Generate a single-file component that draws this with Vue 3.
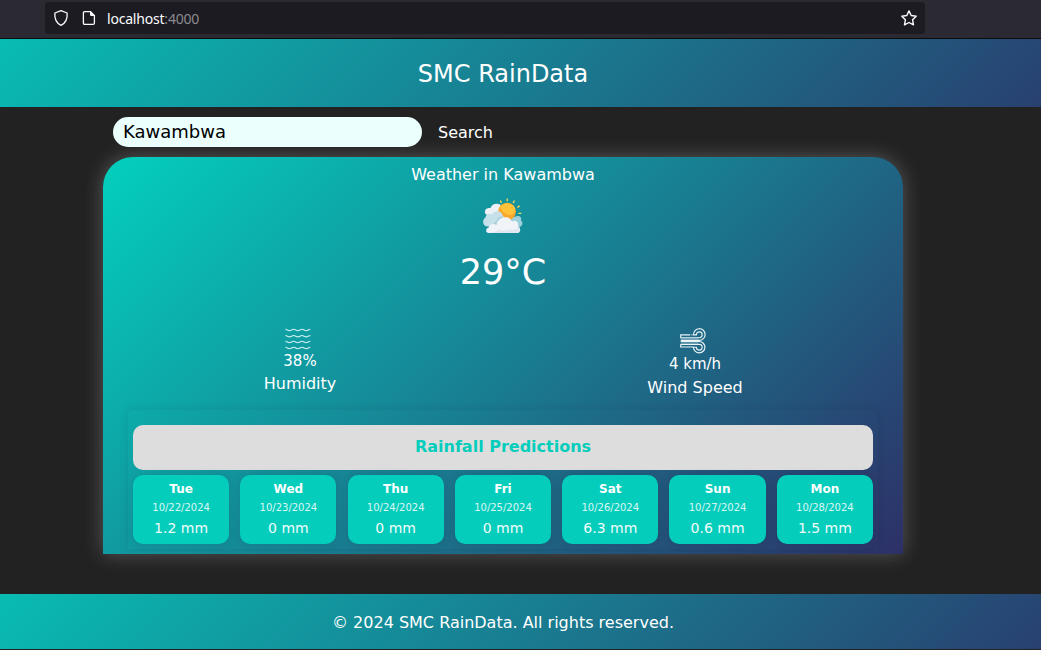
<script setup>
const days = [
  { day: 'Tue', date: '10/22/2024', rain: '1.2 mm' },
  { day: 'Wed', date: '10/23/2024', rain: '0 mm' },
  { day: 'Thu', date: '10/24/2024', rain: '0 mm' },
  { day: 'Fri', date: '10/25/2024', rain: '0 mm' },
  { day: 'Sat', date: '10/26/2024', rain: '6.3 mm' },
  { day: 'Sun', date: '10/27/2024', rain: '0.6 mm' },
  { day: 'Mon', date: '10/28/2024', rain: '1.5 mm' },
]
</script>

<template>
  <div class="window">
    <div class="toolbar">
      <div class="urlbar">
        <svg class="shield" width="16" height="18" viewBox="0 0 16 18" fill="none" stroke="#fbfbfe" stroke-width="1.3" stroke-linejoin="round">
          <path d="M8 1.7 L14.1 4 C14.6 9.5 12.8 14 8 16.3 C3.2 14 1.4 9.5 1.9 4 Z" />
        </svg>
        <svg class="page" width="14" height="16" viewBox="0 0 14 16">
          <path d="M2.7 1.6 H8.5 L12.4 5.5 V13 Q12.4 14.3 11.1 14.3 H2.7 Q1.4 14.3 1.4 13 V2.9 Q1.4 1.6 2.7 1.6 Z" fill="none" stroke="#fbfbfe" stroke-width="1.3" />
          <path d="M8 1.2 V4.8 Q8 6 9.2 6 H12.8 Z" fill="#fbfbfe" />
        </svg>
        <span class="url">localhost<span class="port">:4000</span></span>
        <svg class="star" width="18" height="18" viewBox="0 0 18 18" fill="none" stroke="#fbfbfe" stroke-width="1.4" stroke-linejoin="round">
          <path d="M9 1.9 L11.2 6.5 L16.2 7.2 L12.6 10.8 L13.5 15.9 L9 13.5 L4.5 15.9 L5.4 10.8 L1.8 7.2 L6.8 6.5 Z" />
        </svg>
      </div>
    </div>

    <header class="band top"><h1>SMC RainData</h1></header>

    <main>
      <div class="search">
        <input type="text" value="Kawambwa" />
        <button>Search</button>
      </div>

      <section class="card">
        <p class="place">Weather in Kawambwa</p>
        <svg class="sky" width="44" height="40" viewBox="0 0 44 40">
          <g stroke="#f3dc62" stroke-width="1.3" stroke-linecap="round">
            <path d="M19.6 4.9 l.6 1.6 M26.2 3 v1.7 M33.2 5 l-.8 1.6 M38.2 10.1 l-1.4 1 M39.8 17.3 h-1.9" />
          </g>
          <path d="M30 31 C28 25 31 20 35 20.5 C39 19 41 22 40 24.5 C43 27 41 30.5 38 31 Z" fill="#9ed0dc" />
          <path d="M4.5 18 C2.6 13.5 6 11.5 9.5 12 C11 6.8 19 6.2 21.5 11 V20 L12 22 Z" fill="#edf1f6" />
          <circle cx="26" cy="15.6" r="8.9" fill="#f9a62c" />
          <path d="M19.5 10 A8.9 8.9 0 0 1 34.3 13 C34 19.5 27.5 20.5 23.5 17 C20.5 15 19 12.5 19.5 10 Z" fill="#ffc238" />
          <path d="M7.5 30.5 C1.5 31 .5 24 4.5 21.5 C5 17.8 8.6 17 11 18.4 C13.5 13.2 21.5 14.8 21.8 20 C25.5 22 25 30.5 21 30.5 Z" fill="#c5e0e9" />
          <path d="M12 30 C13.5 28 11.5 26.5 15.5 25.5 C16.5 21 19.5 20 22.5 21.5 C25 24 23 30 20 30.5 Z" fill="#a9cfdc" />
          <path d="M7.8 37 C4.3 37 4.2 32.5 7.7 31.4 C8.5 28.2 12.5 27.2 15.5 29 C17 20 28.5 19 31 25.4 C35.5 23.5 38 27 36.8 30.3 C40.5 31.8 39.7 37 36 37 Z" fill="#f0f3f8" />
          <path d="M7.8 37 Q15 36.5 18 33 Q21 36 28 33.5 Q34 35 37.6 31 C39.5 33.5 38.8 37 36 37 Z" fill="#e1e7ef" />
        </svg>
        <p class="temp">29°C</p>
        <div class="details">
          <div class="detail humidity">
            <svg width="26" height="22" viewBox="0 0 26 22" fill="none" stroke="#d5f2f1" stroke-width="1.1">
              <path v-for="y in [2, 8.2, 14, 20]" :key="y" :d="`M.4 ${y - .7} c1.5 0 2.5 1.4 4.1 1.4 s2.6 -1.4 4.2 -1.4 s2.5 1.4 4.1 1.4 s2.6 -1.4 4.2 -1.4 s2.5 1.4 4.1 1.4 s2.6 -1.4 4.2 -1.4`" />
            </svg>
            <span class="value">38%</span>
            <span class="label">Humidity</span>
          </div>
          <div class="detail wind">
            <svg width="26" height="26" viewBox="0 0 26 26" fill="none" stroke="#e8f3f6" stroke-width="1.15">
              <path d="M10.2 6.8 H.7 V9.7 H19.3 A2.9 2.9 0 1 0 16.4 6.8 H13.5 A5.8 5.8 0 1 1 19.3 12.3 H.7 M11.4 6.8 H12.4" />
              <path d="M.7 13.5 H19.3 A5.7 5.7 0 1 1 13.5 19.2 H16.4 A2.9 2.9 0 1 0 19.3 16.3 H.7" />
              <path d="M.7 16.3 V19 H13.5" />
              <path d="M.7 11 H18.5 M.7 14.9 H18.5" stroke-width=".7" opacity=".7" />
            </svg>
            <span class="value">4 km/h</span>
            <span class="label">Wind Speed</span>
          </div>
        </div>

        <div class="forecast">
          <h2>Rainfall Predictions</h2>
          <div class="days">
            <article v-for="d in days" :key="d.day">
              <strong>{{ d.day }}</strong>
              <time>{{ d.date }}</time>
              <span>{{ d.rain }}</span>
            </article>
          </div>
        </div>
      </section>
    </main>

    <footer class="band bottom"><p>© 2024 SMC RainData. All rights reserved.</p></footer>
  </div>
</template>

<style>
body { margin: 0; background: #222; }
</style>

<style scoped>
* { box-sizing: border-box; }
h1, h2, p { margin: 0; font-weight: 400; }
svg { display: block; flex: none; }
.window {
  width: 1041px;
  height: 650px;
  overflow: hidden;
  background: #222;
  color: #fff;
  font-family: "DejaVu Sans", sans-serif;
  font-size: 16px;
}
.toolbar {
  height: 39px;
  padding: 2px 0 0 45px;
  background: #2b2a33;
  border-bottom: 1px solid #0c0c0d;
}
.urlbar {
  width: 880px;
  height: 32px;
  display: flex;
  align-items: center;
  padding: 0 7px 0 8px;
  border-radius: 4px;
  background: #1c1b22;
}
.page { margin-left: 13px; }
.url {
  margin-left: 11px;
  flex: 1;
  padding-top: 1px;
  font: 14px/20px "Noto Sans", sans-serif;
  letter-spacing: -.2px;
  color: #fbfbfe;
}
.port { color: #8b8a90; }
.band {
  width: 1366px;
  margin-left: -180px;
  display: flex;
  justify-content: center;
  align-items: center;
  background: linear-gradient(135deg, #03d0be, #2d3067);
}
.top { height: 68px; }
.top h1 { font-size: 24px; line-height: 28px; padding-top: 2px; }
main {
  width: 800px;
  height: 487px;
  margin-left: 103px;
  padding-top: 10px;
}
.search {
  display: flex;
  height: 30px;
  margin: 0 0 10px 10px;
}
.search input {
  width: 309px;
  height: 30px;
  border: 0;
  outline: 0;
  border-radius: 15px;
  padding: 0 10px 2px;
  background: #ebfffc;
  color: #000;
  font: 18px "DejaVu Sans", sans-serif;
}
.search button {
  margin-left: 10px;
  padding: 0 6px;
  border: 0;
  background: none;
  color: #fff;
  font: 16px "DejaVu Sans", sans-serif;
}
.card {
  height: 397px;
  display: flex;
  flex-direction: column;
  align-items: center;
  border-radius: 30px 30px 0 0;
  background: linear-gradient(135deg, #03d0be, #2d3067);
  box-shadow: 0 0 20px rgba(255, 255, 255, .25);
}
.place { margin-top: 8px; line-height: 19px; }
.sky { margin-top: 12px; }
.temp { margin-top: 15px; font-size: 35px; line-height: 42px; }
.details {
  width: 790px;
  height: 94px;
  margin: 23px 11px 0 0;
  display: grid;
  grid-template-columns: 1fr 1fr;
  padding-top: 12px;
}
.detail {
  display: flex;
  flex-direction: column;
  align-items: center;
  line-height: 23px;
}
.detail .value { font-size: 15px; line-height: 18px; }
.humidity svg { margin: 0 5px 0 0; }
.humidity .value { margin: 2px 0; }
.wind svg { margin-right: 4px; }
.wind .value { margin: 1px 0 3px; }
.forecast {
  width: 750px;
  height: 139px;
  padding: 15px 5px 5px;
  border-radius: 5px 5px 0 0;
  box-shadow: 0 0 10px rgba(0, 0, 0, .1);
}
.forecast h2 {
  height: 45px;
  border-radius: 10px;
  background: #ddd;
  color: #04cdbc;
  font-size: 16px;
  font-weight: 700;
  line-height: 43px;
  text-align: center;
}
.days { display: flex; justify-content: space-between; margin-top: 5px; }
article {
  width: 13%;
  height: 69px;
  display: flex;
  flex-direction: column;
  align-items: center;
  padding-top: 7px;
  border-radius: 10px;
  background: #04cdbc;
  box-shadow: 0 0 10px rgba(0, 0, 0, .1);
}
article strong { font-size: 12px; line-height: 14px; }
article time { margin-top: 6px; font-size: 10px; line-height: 12px; opacity: .85; }
article span { margin-top: 6px; font-size: 14px; line-height: 17px; opacity: .95; }
.bottom { height: 55px; }
.bottom p { line-height: 19px; margin-top: 2px; }
</style>
